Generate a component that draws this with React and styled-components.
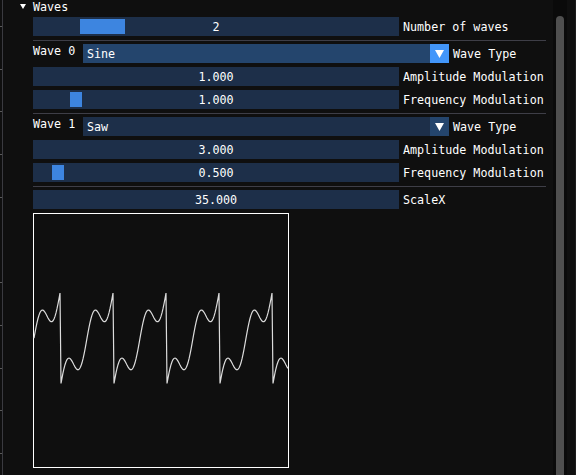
import React, { useMemo } from 'react';
import styled, { createGlobalStyle } from 'styled-components';

const GlobalStyle = createGlobalStyle`
  html, body, #root {
    margin: 0;
    padding: 0;
    height: 100%;
    overflow: hidden;
    background: #0f0f0f;
  }
  body {
    font-family: 'DejaVu Sans Mono', 'Liberation Mono', monospace;
    font-size: 11.7px;
    line-height: 13px;
    color: #ffffff;
  }
`;

const Window = styled.div`
  display: flex;
  width: 576px;
  height: 475px;
  background: #0f0f0f;
  overflow: hidden;
`;

const LeftEdge = styled.div`
  width: 4px;
  flex: none;
  background:
    linear-gradient(to right, transparent 2px, #3a3a40 2px, #3a3a40 3px, transparent 3px),
    repeating-linear-gradient(to bottom, transparent 0, transparent 26px, #5a5a5a 26px, #5a5a5a 27px, transparent 27px, transparent 42.7px);
  background-size: 100% 100%, 2px 100%;
  background-repeat: no-repeat;
`;

const Content = styled.div`
  width: 542px;
  flex: none;
  padding-left: 16px;
  box-sizing: border-box;
`;

const Header = styled.div`
  display: flex;
  align-items: center;
  gap: 7px;
  height: 13px;

  span {
    padding-top: 1px;
  }
`;

const TreeBody = styled.div`
  display: flex;
  flex-direction: column;
  gap: 4px;
  padding-left: 13px;
  margin-top: 4px;
`;

const Row = styled.div`
  display: flex;
  align-items: center;
  gap: 4px;
`;

const Frame = styled.div`
  position: relative;
  width: 366px;
  height: 19px;
  box-sizing: border-box;
  padding-top: 1px;
  background: #1d2f49;
  display: flex;
  align-items: center;
  justify-content: center;
`;

const Grab = styled.div`
  position: absolute;
  top: 2px;
  bottom: 2px;
  background: #3d85e0;
`;

const Value = styled.span`
  position: relative;
`;

const Label = styled.span`
  padding-top: 1px;
  white-space: nowrap;
`;

const Separator = styled.div`
  height: 1px;
  width: 513px;
  background: #3e3e47;
  margin-bottom: -1px;
`;

const WaveRow = styled.div`
  display: flex;
  align-items: flex-start;
`;

const WaveName = styled.span`
  width: 50px;
  flex: none;
  padding-top: 1px;
`;

const Combo = styled.div`
  display: flex;
  width: 366px;
  height: 19px;
  flex: none;
`;

const ComboValue = styled.div`
  flex: 1;
  display: flex;
  align-items: center;
  padding: 1px 4px 0;
  background: ${p => (p.$hover ? '#24456d' : '#1d2f49')};
`;

const ComboArrow = styled.div`
  width: 19px;
  display: flex;
  align-items: center;
  justify-content: center;
  background: ${p => (p.$hover ? '#4296fa' : '#24456d')};
`;

const ComboLabel = styled(Label)`
  margin-left: 4px;
  align-self: center;
`;

const PlotBox = styled.div`
  width: 256px;
  height: 255px;
  box-sizing: border-box;
  border: 1px solid #ffffff;

  svg {
    display: block;
    overflow: visible;
  }
`;

const Gutter = styled.div`
  width: 7px;
  flex: none;
`;

const ScrollTrack = styled.div`
  width: 14px;
  flex: none;
  box-sizing: border-box;
  padding: 16px 3px 0;
  background: #0a0a0a;
  display: flex;
`;

const ScrollGrab = styled.div`
  flex: 1;
  background: #4f4f4f;
  border-radius: 4px 4px 0 0;
`;

const RightEdge = styled.div`
  width: 9px;
  flex: none;
  box-sizing: border-box;
  border-right: 1px solid #1c1c1c;
`;

function DownArrow({ w, h }) {
  return (
    <svg width={w} height={h} viewBox={`0 0 ${w} ${h}`}>
      <polygon points={`0,0 ${w},0 ${w / 2},${h}`} fill='#ffffff' />
    </svg>
  );
}

function Slider({ value, label, grab }) {
  return (
    <Row>
      <Frame>
        {grab && <Grab style={{ left: grab[0], width: grab[1] }} />}
        <Value>{value}</Value>
      </Frame>
      <Label>{label}</Label>
    </Row>
  );
}

function WaveCombo({ index, type, hover }) {
  return (
    <WaveRow>
      <WaveName>Wave {index}</WaveName>
      <Combo>
        <ComboValue $hover={hover}>{type}</ComboValue>
        <ComboArrow $hover={hover}>
          <DownArrow w={9} h={8} />
        </ComboArrow>
      </Combo>
      <ComboLabel>Wave Type</ComboLabel>
    </WaveRow>
  );
}

// saw (amp 3, freq 0.5) + sine (amp 1, freq 1), sampled per pixel
function Waveform() {
  const points = useMemo(() => {
    const pts = [];
    for (let x = 0; x <= 254; x++) {
      const u = (x - 26.7) / 53;
      const saw = 2 * (u - Math.floor(u)) - 1;
      const sine = Math.sin((2 * Math.PI * (x - 26.2)) / 26.5);
      const f = 3 * saw + sine;
      pts.push(`${x},${(125 - 16 * f).toFixed(2)}`);
    }
    return pts.join(' ');
  }, []);

  return (
    <PlotBox>
      <svg width='254' height='253'>
        <polyline points={points} fill='none' stroke='#dcdcdc' strokeWidth='1.2' />
      </svg>
    </PlotBox>
  );
}

export default function App() {
  return (
    <Window>
      <GlobalStyle />
      <LeftEdge />
      <Content>
        <Header>
          <DownArrow w={6} h={5} />
          <span>Waves</span>
        </Header>
        <TreeBody>
          <Slider value='2' label='Number of waves' grab={[47, 45]} />
          <Separator />
          <WaveCombo index={0} type='Sine' hover />
          <Slider value='1.000' label='Amplitude Modulation' />
          <Slider value='1.000' label='Frequency Modulation' grab={[37, 12]} />
          <Separator />
          <WaveCombo index={1} type='Saw' />
          <Slider value='3.000' label='Amplitude Modulation' />
          <Slider value='0.500' label='Frequency Modulation' grab={[19, 12]} />
          <Separator />
          <Slider value='35.000' label='ScaleX' />
          <Waveform />
        </TreeBody>
      </Content>
      <Gutter />
      <ScrollTrack>
        <ScrollGrab />
      </ScrollTrack>
      <RightEdge />
    </Window>
  );
}
